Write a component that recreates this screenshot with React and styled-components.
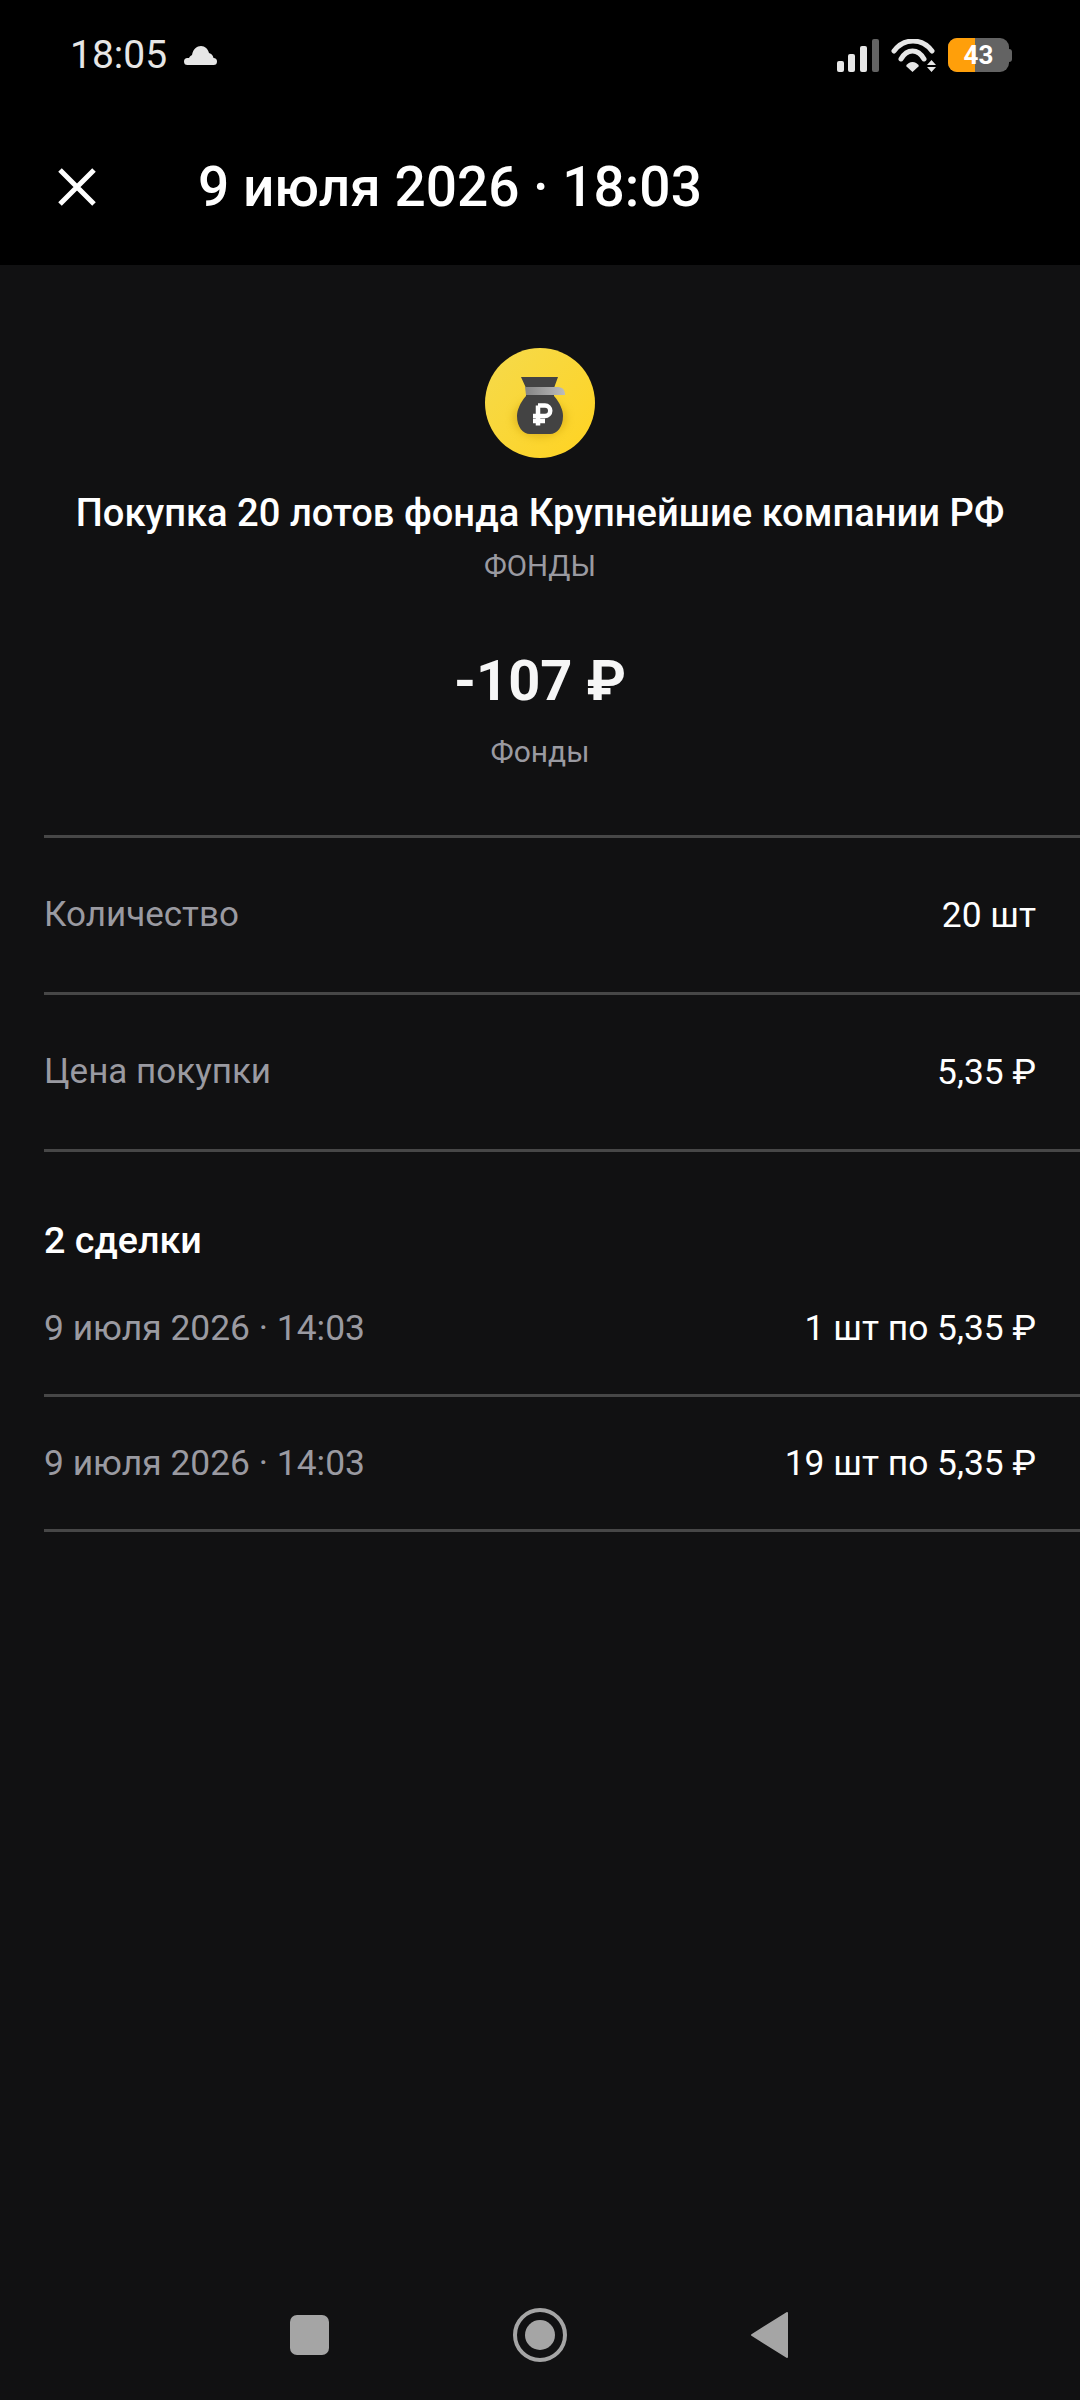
import React from "react";
import styled, { createGlobalStyle } from "styled-components";

const GlobalStyle = createGlobalStyle`
  html, body {
    margin: 0;
    padding: 0;
    background: #111112;
  }
  * {
    box-sizing: border-box;
  }
`;

const Page = styled.div`
  width: 1080px;
  height: 2400px;
  display: flex;
  flex-direction: column;
  background: #111112;
  font-family: Roboto, "Noto Sans", sans-serif;
  overflow: hidden;
`;

const Top = styled.header`
  height: 265px;
  flex: none;
  background: #000;
  display: flex;
  flex-direction: column;
`;

const StatusBar = styled.div`
  height: 108px;
  padding: 2px 68px 0 70px;
  display: flex;
  align-items: center;
  justify-content: space-between;
  color: #e6e6e6;
`;

const StatusLeft = styled.div`
  display: flex;
  align-items: center;
  gap: 17px;
`;

const Clock = styled.span`
  font-size: 39px;
  line-height: 44px;
`;

const StatusRight = styled.div`
  display: flex;
  align-items: center;
  gap: 12px;
`;

const BatteryWrap = styled.div`
  display: flex;
  align-items: center;
`;

const Battery = styled.div`
  position: relative;
  width: 61px;
  height: 34px;
  border-radius: 9px;
  overflow: hidden;
  background: #636363;
  display: flex;
  align-items: center;
  justify-content: center;
  color: #fff;
  font-size: 26px;
  font-weight: 700;
  line-height: 34px;
`;

const BatteryFill = styled.div`
  position: absolute;
  left: 0;
  top: 0;
  bottom: 0;
  background: #ff9f0a;
`;

const BatteryText = styled.span`
  position: relative;
`;

const BatteryTip = styled.div`
  width: 3px;
  height: 13px;
  border-radius: 0 3px 3px 0;
  background: #636363;
`;

const TitleBar = styled.div`
  flex: 1;
  padding-left: 58px;
  display: flex;
  align-items: center;
  gap: 102px;
`;

const Title = styled.h1`
  margin: 0;
  color: #fff;
  font-size: 55px;
  line-height: 64px;
  font-weight: 500;
`;

const Summary = styled.section`
  padding-top: 83px;
  display: flex;
  flex-direction: column;
  align-items: center;
`;

const OperationName = styled.div`
  margin-top: 30px;
  color: #fff;
  font-size: 38.15px;
  line-height: 50px;
  font-weight: 500;
`;

const Category = styled.div`
  margin-top: 9px;
  color: #9a9aa1;
  font-size: 29.5px;
  line-height: 38px;
`;

const Amount = styled.div`
  margin-top: 63px;
  color: #f6f6f6;
  font-size: 56px;
  line-height: 66px;
  font-weight: 700;
`;

const AmountNote = styled.div`
  margin-top: 20px;
  margin-bottom: 65px;
  color: #9a9aa1;
  font-size: 30px;
  line-height: 36px;
`;

const List = styled.div`
  margin-left: 44px;
  border-top: 3px solid #474747;
`;

const Row = styled.div`
  height: ${p => p.$height}px;
  padding-right: 44px;
  display: flex;
  align-items: center;
  justify-content: space-between;
  font-size: 35.4px;
  line-height: 44px;
  border-bottom: 3px solid #474747;
`;

const Label = styled.span`
  color: #9a9aa1;
  font-size: 35px;
`;

const DateLabel = styled(Label)`
  font-size: 35.4px;
`;

const Value = styled.span`
  color: #fff;
`;

const DealsHeading = styled.div`
  margin-top: 66px;
  color: #fff;
  font-size: 37.7px;
  line-height: 44px;
  font-weight: 500;
`;

const NavBar = styled.nav`
  margin-top: auto;
  height: 120px;
  flex: none;
  padding: 0 0 10px 290px;
  display: flex;
  align-items: center;
  gap: 184px;
`;

const CloseIcon = () => (
  <svg width="38" height="38" viewBox="0 0 38 38">
    <path d="M2 2 L36 36 M36 2 L2 36" stroke="#fff" strokeWidth="5" fill="none" />
  </svg>
);

const CloudIcon = () => (
  <svg width="33" height="19" viewBox="0 0 33 19">
    <path
      d="M3.500 19 A3.500 3.500 0 0 1 3.500 12 L5 12 C6 10 7 9.500 8 9 C9 3 13 0 17 0 C21 0 24 3 25 7 C27.500 7.500 29 9.500 29.500 12 A3.500 3.500 0 0 1 29.500 19 Z"
      fill="#e6e6e6"
    />
  </svg>
);

const SignalIcon = () => (
  <svg width="42" height="33" viewBox="0 0 42 33">
    <rect x="0" y="22" width="7" height="11" rx="2" fill="#e6e6e6" />
    <rect x="11" y="15" width="7" height="18" rx="2" fill="#e6e6e6" />
    <rect x="23" y="7" width="7" height="26" rx="2" fill="#e6e6e6" />
    <rect x="35" y="0" width="7" height="33" rx="2" fill="#636363" />
  </svg>
);

const WifiIcon = () => (
  <svg width="45" height="33" viewBox="0 0 45 33">
    <path d="M3 12 C13 -1.300 31 -1.300 41 12" stroke="#e6e6e6" strokeWidth="5" fill="none" strokeLinecap="round" />
    <path d="M10 20 C16 9.300 27 9.300 33 20" stroke="#e6e6e6" strokeWidth="5" fill="none" strokeLinecap="round" />
    <path d="M15 27 C18 21.500 25 21.500 28 27 L21.500 33 Z" fill="#e6e6e6" />
    <path d="M36 26 L40.500 21 L45 26 Z M36 28 L45 28 L40.500 33 Z" fill="#e6e6e6" />
  </svg>
);

const BagIcon = () => (
  <svg width="110" height="110" viewBox="0 0 110 110">
    <defs>
      <linearGradient id="coin" x1="0" y1="0" x2="1" y2="1">
        <stop offset="0" stopColor="#f5da4c" />
        <stop offset="1" stopColor="#ffd321" />
      </linearGradient>
      <linearGradient id="band" x1="0" y1="0" x2="1" y2="0">
        <stop offset="0" stopColor="#858585" />
        <stop offset="1" stopColor="#bcbcbc" />
      </linearGradient>
      <filter id="soft" x="-30%" y="-30%" width="160%" height="160%">
        <feGaussianBlur stdDeviation="4" />
      </filter>
    </defs>
    <circle cx="55" cy="55" r="55" fill="url(#coin)" />
    <ellipse cx="55" cy="70" rx="26" ry="19" fill="#c79a10" opacity="0.55" filter="url(#soft)" />
    <path
      d="M36 29 H73 L69 40 L69 48 C75 55 78 62 78 68 C78 79 72 86 65 86 H45 C38 86 32 79 32 68 C32 62 35 55 41 48 L41 40 Z"
      fill="#434343"
    />
    <path d="M40 39 H72 C77 39 80 41 80 47 H41 Z" fill="url(#band)" />
    <path
      d="M53 57.500 H60 A5.200 5.200 0 0 1 60 68 H53 M48 68 H53 M48 73 H60 M53 57.500 V77.500"
      stroke="#fff"
      strokeWidth="4.500"
      fill="none"
    />
  </svg>
);

const SquareIcon = () => (
  <svg width="39" height="40" viewBox="0 0 39 40">
    <rect width="39" height="40" rx="7" fill="#a5a5a5" />
  </svg>
);

const HomeIcon = () => (
  <svg width="54" height="54" viewBox="0 0 54 54">
    <circle cx="27" cy="27" r="25" fill="none" stroke="#a5a5a5" strokeWidth="4" />
    <circle cx="27" cy="27" r="15" fill="#a5a5a5" />
  </svg>
);

const BackIcon = () => (
  <svg width="37" height="46" viewBox="0 0 37 46">
    <path d="M36 1 L36 45 L1 23 Z" fill="#a5a5a5" stroke="#a5a5a5" strokeWidth="2" strokeLinejoin="round" />
  </svg>
);

export default function App() {
  return (
    <Page>
      <GlobalStyle />
      <Top>
        <StatusBar>
          <StatusLeft>
            <Clock>18:05</Clock>
            <CloudIcon />
          </StatusLeft>
          <StatusRight>
            <SignalIcon />
            <WifiIcon />
            <BatteryWrap>
              <Battery>
                <BatteryFill style={{ width: "44%" }} />
                <BatteryText>43</BatteryText>
              </Battery>
              <BatteryTip />
            </BatteryWrap>
          </StatusRight>
        </StatusBar>
        <TitleBar>
          <CloseIcon />
          <Title>9 июля 2026 · 18:03</Title>
        </TitleBar>
      </Top>

      <Summary>
        <BagIcon />
        <OperationName>Покупка 20 лотов фонда Крупнейшие компании РФ</OperationName>
        <Category>ФОНДЫ</Category>
        <Amount>-107 ₽</Amount>
        <AmountNote>Фонды</AmountNote>
      </Summary>

      <List>
        <Row $height={157}>
          <Label>Количество</Label>
          <Value>20 шт</Value>
        </Row>
        <Row $height={157}>
          <Label>Цена покупки</Label>
          <Value>5,35 ₽</Value>
        </Row>
        <DealsHeading>2 сделки</DealsHeading>
        <Row $height={135}>
          <DateLabel>9 июля 2026 · 14:03</DateLabel>
          <Value>1 шт по 5,35 ₽</Value>
        </Row>
        <Row $height={135}>
          <DateLabel>9 июля 2026 · 14:03</DateLabel>
          <Value>19 шт по 5,35 ₽</Value>
        </Row>
      </List>

      <NavBar>
        <SquareIcon />
        <HomeIcon />
        <BackIcon />
      </NavBar>
    </Page>
  );
}
